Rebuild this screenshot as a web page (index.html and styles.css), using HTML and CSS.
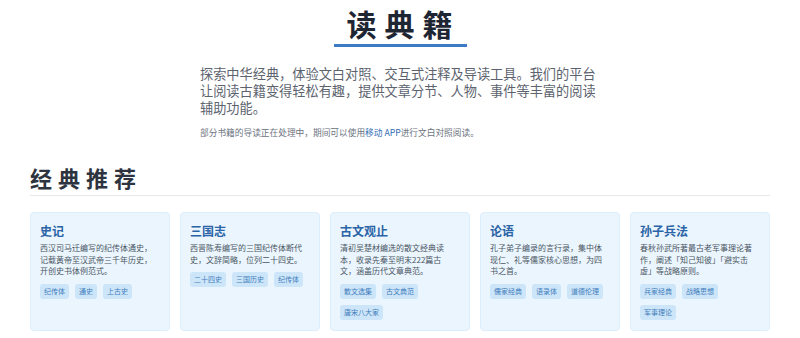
FILE: index.html
```html
<!DOCTYPE html>
<html lang="zh-CN">
<head>
<meta charset="utf-8">
<title>读典籍</title>
<link rel="stylesheet" href="styles.css">
</head>
<body>
<div class="page">
  <header class="hero">
    <h1 class="hero-title">读典籍</h1>
    <p class="hero-intro">探索中华经典，体验文白对照、交互式注释及导读工具。我们的平台让阅读古籍变得轻松有趣，提供文章分节、人物、事件等丰富的阅读辅助功能。</p>
    <p class="hero-note">部分书籍的导读正在处理中，期间可以使用<a class="note-link" href="#">移动 APP</a>进行文白对照阅读。</p>
  </header>
  <section class="featured">
    <h2 class="section-title">经典推荐</h2>
    <div class="cards">
      <div class="card">
        <h3 class="card-title">史记</h3>
        <p class="card-desc">西汉司马迁编写的纪传体通史，记载黄帝至汉武帝三千年历史，开创史书体例范式。</p>
        <div class="tags"><span class="tag">纪传体</span><span class="tag">通史</span><span class="tag">上古史</span></div>
      </div>
      <div class="card">
        <h3 class="card-title">三国志</h3>
        <p class="card-desc">西晋陈寿编写的三国纪传体断代史，文辞简略，位列二十四史。</p>
        <div class="tags"><span class="tag">二十四史</span><span class="tag">三国历史</span><span class="tag">纪传体</span></div>
      </div>
      <div class="card">
        <h3 class="card-title">古文观止</h3>
        <p class="card-desc">清初吴楚材编选的散文经典读本，收录先秦至明末222篇古文，涵盖历代文章典范。</p>
        <div class="tags"><span class="tag">散文选集</span><span class="tag">古文典范</span><span class="tag">唐宋八大家</span></div>
      </div>
      <div class="card">
        <h3 class="card-title">论语</h3>
        <p class="card-desc">孔子弟子编录的言行录，集中体现仁、礼等儒家核心思想，为四书之首。</p>
        <div class="tags"><span class="tag">儒家经典</span><span class="tag">语录体</span><span class="tag">道德伦理</span></div>
      </div>
      <div class="card">
        <h3 class="card-title">孙子兵法</h3>
        <p class="card-desc">春秋孙武所著最古老军事理论著作，阐述「知己知彼」「避实击虚」等战略原则。</p>
        <div class="tags"><span class="tag">兵家经典</span><span class="tag">战略思想</span><span class="tag">军事理论</span></div>
      </div>
    </div>
  </section>
</div>
</body>
</html>
```

FILE: styles.css
```css
* { box-sizing: border-box; }
html, body { margin: 0; padding: 0; background: #ffffff; }
body {
  font-family: "Noto Sans CJK SC", "Noto Sans", sans-serif;
  color: #333;
}
.page {
  width: 740px;
  margin: 0 auto;
}
.hero {
  display: flex;
  flex-direction: column;
  align-items: center;
  padding-top: 2px;
}
.hero-title {
  margin: 0;
  font-size: 30px;
  font-weight: 700;
  line-height: 42px;
  letter-spacing: 8px;
  color: #1f2633;
  padding: 0 6px 0 13px;
  border-bottom: 3px solid #3d7cc4;
  white-space: nowrap;
}
.hero-intro {
  width: 400px;
  margin: 18px 0 0;
  font-size: 13.2px;
  line-height: 17px;
  color: #5c636e;
}
.hero-note {
  width: 400px;
  margin: 10px 0 0;
  font-size: 8.7px;
  line-height: 14px;
  color: #6b7280;
}
.note-link {
  color: #2f6db5;
  text-decoration: none;
}
.featured {
  margin-top: 22px;
}
.section-title {
  margin: 0;
  font-size: 22px;
  font-weight: 700;
  letter-spacing: 6px;
  line-height: 30px;
  color: #2d3440;
  padding-bottom: 3px;
  border-bottom: 1px solid #e6e8eb;
}
.cards {
  display: flex;
  gap: 10px;
  margin-top: 16px;
}
.card {
  width: 140px;
  flex: none;
  background: #ebf5fe;
  border: 1px solid #dcedfb;
  border-radius: 4px;
  padding: 9px 13px 10px 9px;
}
.card-title {
  margin: 0;
  font-size: 12px;
  line-height: 17px;
  font-weight: 700;
  color: #2a64a6;
}
.card-desc {
  margin: 3px 0 0;
  font-size: 8px;
  line-height: 11.5px;
  color: #4a5563;
}
.tags {
  display: flex;
  flex-wrap: wrap;
  gap: 6px 6px;
  margin-top: 7px;
}
.tag {
  font-size: 7px;
  line-height: 15px;
  padding: 0 4px;
  background: #cde5f8;
  color: #3f7dbd;
  border-radius: 3px;
}
```
